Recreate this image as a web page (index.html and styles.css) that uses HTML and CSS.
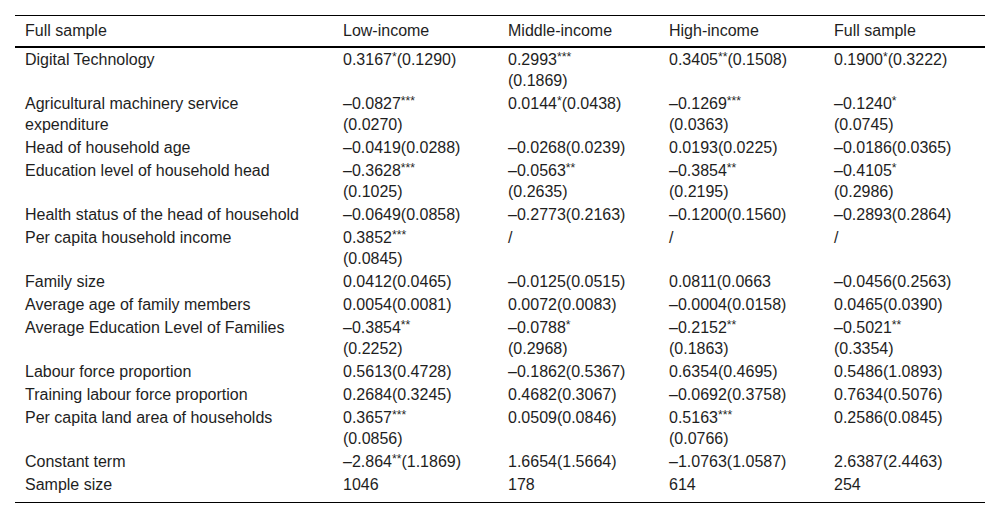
FILE: index.html
```html
<!DOCTYPE html>
<html lang="en">
<head>
<meta charset="utf-8">
<title>Regression results</title>
<link rel="stylesheet" href="styles.css">
</head>
<body>
<div class="wrap">
<table class="results">
  <colgroup>
    <col class="c-var">
    <col class="c-low">
    <col class="c-mid">
    <col class="c-high">
    <col class="c-full">
  </colgroup>
  <thead>
    <tr>
      <th>Full sample</th>
      <th>Low-income</th>
      <th>Middle-income</th>
      <th>High-income</th>
      <th>Full sample</th>
    </tr>
  </thead>
  <tbody>
    <tr>
      <td>Digital Technology</td>
      <td>0.3167<sup>*</sup>(0.1290)</td>
      <td>0.2993<sup>***</sup><br>(0.1869)</td>
      <td>0.3405<sup>**</sup>(0.1508)</td>
      <td>0.1900<sup>*</sup>(0.3222)</td>
    </tr>
    <tr>
      <td>Agricultural machinery service<br>expenditure</td>
      <td>–0.0827<sup>***</sup><br>(0.0270)</td>
      <td>0.0144<sup>*</sup>(0.0438)</td>
      <td>–0.1269<sup>***</sup><br>(0.0363)</td>
      <td>–0.1240<sup>*</sup><br>(0.0745)</td>
    </tr>
    <tr>
      <td>Head of household age</td>
      <td>–0.0419(0.0288)</td>
      <td>–0.0268(0.0239)</td>
      <td>0.0193(0.0225)</td>
      <td>–0.0186(0.0365)</td>
    </tr>
    <tr>
      <td>Education level of household head</td>
      <td>–0.3628<sup>***</sup><br>(0.1025)</td>
      <td>–0.0563<sup>**</sup><br>(0.2635)</td>
      <td>–0.3854<sup>**</sup><br>(0.2195)</td>
      <td>–0.4105<sup>*</sup><br>(0.2986)</td>
    </tr>
    <tr>
      <td>Health status of the head of household</td>
      <td>–0.0649(0.0858)</td>
      <td>–0.2773(0.2163)</td>
      <td>–0.1200(0.1560)</td>
      <td>–0.2893(0.2864)</td>
    </tr>
    <tr>
      <td>Per capita household income</td>
      <td>0.3852<sup>***</sup><br>(0.0845)</td>
      <td>/</td>
      <td>/</td>
      <td>/</td>
    </tr>
    <tr>
      <td>Family size</td>
      <td>0.0412(0.0465)</td>
      <td>–0.0125(0.0515)</td>
      <td>0.0811(0.0663</td>
      <td>–0.0456(0.2563)</td>
    </tr>
    <tr>
      <td>Average age of family members</td>
      <td>0.0054(0.0081)</td>
      <td>0.0072(0.0083)</td>
      <td>–0.0004(0.0158)</td>
      <td>0.0465(0.0390)</td>
    </tr>
    <tr>
      <td>Average Education Level of Families</td>
      <td>–0.3854<sup>**</sup><br>(0.2252)</td>
      <td>–0.0788<sup>*</sup><br>(0.2968)</td>
      <td>–0.2152<sup>**</sup><br>(0.1863)</td>
      <td>–0.5021<sup>**</sup><br>(0.3354)</td>
    </tr>
    <tr>
      <td>Labour force proportion</td>
      <td>0.5613(0.4728)</td>
      <td>–0.1862(0.5367)</td>
      <td>0.6354(0.4695)</td>
      <td>0.5486(1.0893)</td>
    </tr>
    <tr>
      <td>Training labour force proportion</td>
      <td>0.2684(0.3245)</td>
      <td>0.4682(0.3067)</td>
      <td>–0.0692(0.3758)</td>
      <td>0.7634(0.5076)</td>
    </tr>
    <tr>
      <td>Per capita land area of households</td>
      <td>0.3657<sup>***</sup><br>(0.0856)</td>
      <td>0.0509(0.0846)</td>
      <td>0.5163<sup>***</sup><br>(0.0766)</td>
      <td>0.2586(0.0845)</td>
    </tr>
    <tr>
      <td>Constant term</td>
      <td>–2.864<sup>**</sup>(1.1869)</td>
      <td>1.6654(1.5664)</td>
      <td>–1.0763(1.0587)</td>
      <td>2.6387(2.4463)</td>
    </tr>
    <tr>
      <td>Sample size</td>
      <td>1046</td>
      <td>178</td>
      <td>614</td>
      <td>254</td>
    </tr>
  </tbody>
</table>
</div>
</body>
</html>
```

FILE: styles.css
```css
html, body {
  margin: 0;
  padding: 0;
  background: #ffffff;
}

.wrap {
  padding: 15px 15px 0 15px;
}

.results {
  width: 970px;
  border-collapse: collapse;
  table-layout: fixed;
  font-family: "Liberation Sans", Arial, Helvetica, sans-serif;
  font-size: 16px;
  line-height: 21px;
  color: #1e1e1e;
}

.c-var { width: 318px; }
.c-low { width: 165px; }
.c-mid { width: 161px; }
.c-high { width: 165px; }
.c-full { width: 161px; }

.results thead tr {
  border-top: 1px solid #000;
  border-bottom: 2px solid #000;
}

.results th {
  font-weight: normal;
  text-align: left;
  padding: 4px 10px 5px 10px;
  white-space: nowrap;
}

.results td {
  text-align: left;
  vertical-align: top;
  padding: 1px 10px;
  white-space: nowrap;
}

.results tbody tr:last-child {
  border-bottom: 1px solid #000;
}

.results tbody tr:last-child td {
  padding-bottom: 7px;
}

.results sup {
  font-size: 0.76em;
  line-height: 0;
  vertical-align: 0.3em;
}
```
